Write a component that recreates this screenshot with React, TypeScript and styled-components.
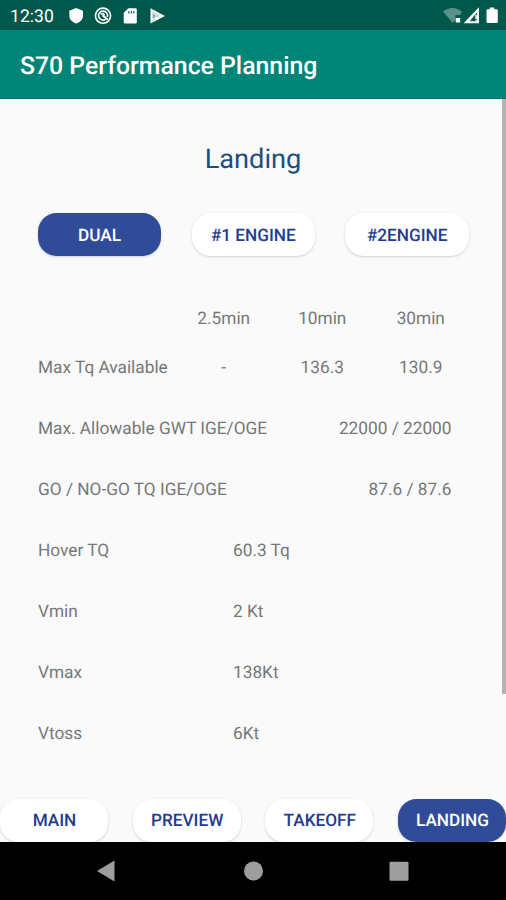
import React from "react";
import styled, { createGlobalStyle } from "styled-components";

const GlobalStyle = createGlobalStyle`
  *, *::before, *::after { box-sizing: border-box; }
  html, body { margin: 0; padding: 0; background: #fafafa; }
  body {
    font-family: Roboto, "Noto Sans", sans-serif;
    text-rendering: geometricPrecision;
    overflow: hidden;
  }
`;

const Screen = styled.div`
  display: flex;
  flex-direction: column;
  width: 506px;
  height: 900px;
  background: #fafafa;
  overflow: hidden;
`;

const StatusBar = styled.header`
  flex: none;
  height: 30px;
  padding: 1px 7px 0 10px;
  display: flex;
  align-items: center;
  justify-content: space-between;
  background: #00574b;
  color: #fff;
`;

const Clock = styled.span`
  width: 58px;
  padding-top: 2px;
  font-size: 17.6px;
  font-weight: 400;
  line-height: 20px;
`;

const StatusGroup = styled.div`
  display: flex;
  align-items: center;
  height: 20px;
`;

const StatusIcon = styled.svg`
  display: block;
  flex: none;
`;

const AppBar = styled.div`
  flex: none;
  height: 69px;
  padding: 5px 20px 0;
  display: flex;
  align-items: center;
  background: #008577;
  border-bottom: 1px solid #067668;
`;

const AppTitle = styled.h1`
  margin: 0;
  color: #fff;
  font-size: 24.8px;
  font-weight: 500;
  line-height: 30px;
  white-space: nowrap;
`;

const Body = styled.div`
  flex: 1;
  min-height: 0;
  display: flex;
`;

const Content = styled.main`
  flex: 1;
  min-width: 0;
  display: flex;
  flex-direction: column;
`;

const ScrollTrack = styled.div`
  flex: none;
  width: 4px;
  margin-left: -4px;
`;

const ScrollThumb = styled.div`
  height: 595px;
  background: #b3b3b3;
`;

const Heading = styled.h2`
  margin: 43px 0 0;
  color: #1b4f7f;
  font-size: 27.2px;
  font-weight: 400;
  line-height: 34px;
  text-align: center;
`;

const EngineRow = styled.div`
  display: grid;
  grid-template-columns: repeat(3, 123.5px);
  column-gap: 30.4px;
  margin: 37px 0 0 37.7px;
`;

const PillButton = styled.button<{ $active?: boolean }>`
  height: 43px;
  padding: 2px 0 0;
  border: 0;
  border-radius: 18.5px;
  background: ${(p) => (p.$active ? "#304c98" : "#ffffff")};
  color: ${(p) => (p.$active ? "#ffffff" : "#243b92")};
  box-shadow: 0 1px 2.5px rgba(0, 0, 0, 0.17);
  font-family: inherit;
  font-size: 17.2px;
  font-weight: 500;
  line-height: 20px;
  text-align: center;
  text-rendering: inherit;
  white-space: nowrap;
`;

const Table = styled.section`
  margin: 38px 0 0 38px;
  color: #777777;
  font-size: 17.25px;
  line-height: 20px;
  white-space: nowrap;
`;

const LimitGrid = styled.div`
  display: grid;
  grid-template-columns: 136.5px repeat(3, 98.5px);
  grid-auto-rows: 49px;
  align-items: center;
  margin-bottom: 6px;
`;

const Limit = styled.span`
  text-align: center;
`;

const PairRow = styled.div`
  display: flex;
  align-items: center;
  justify-content: space-between;
  width: 413.5px;
  height: 61px;
`;

const ValueRow = styled.div`
  display: grid;
  grid-template-columns: 195px 1fr;
  align-items: center;
  height: 61px;
`;

const Tabs = styled.nav`
  display: grid;
  grid-template-columns: repeat(4, 108px);
  justify-content: space-between;
  height: 44px;
  margin-top: auto;
  width: 506px;

  ${PillButton} {
    margin-top: 0.5px;
    padding: 1px 0 0 1px;
  }
`;

const NavBar = styled.footer`
  position: relative;
  flex: none;
  height: 58px;
  padding-left: 97px;
  display: flex;
  align-items: center;
  background: #000;
`;

const pairs = [
  ["Max. Allowable GWT IGE/OGE", "22000 / 22000"],
  ["GO / NO-GO TQ IGE/OGE", "87.6 / 87.6"],
];

const values = [
  ["Hover TQ", "60.3 Tq"],
  ["Vmin", "2 Kt"],
  ["Vmax", "138Kt"],
  ["Vtoss", "6Kt"],
];

function NotificationIcons() {
  return (
    <StatusIcon width="100" height="20" viewBox="0 0 100 20" fill="#fff">
      <path d="M8.2 2 15 4.7v5.1c0 3.6-2.7 6.3-6.8 7.8C4.100 16.100 1.300 13.400 1.300 9.800V4.700Z" />
      <g fill="none" stroke="#fff">
        <circle cx="35" cy="9.700" r="7.600" strokeWidth="1.600" />
        <path d="M37.600 13.300a4.500 4.500 0 1 1 1.700-2.200" strokeWidth="1.600" />
        <path d="m34.500 9.200 5.300 4.600" strokeWidth="2.100" />
        <path d="M32.600 8.300 35 7.500l1.600 1.800" strokeWidth="1.500" />
      </g>
      <path
        fillRule="evenodd"
        d="M60.300 2.200h7.200q1.300 0 1.300 1.300v12.700q0 1.300-1.300 1.300H57q-1.300 0-1.300-1.300V6.800ZM60.300 5v2.400h1.100V5Zm2.500 0v2.400h1.100V5Zm2.500 0v2.400h1.100V5Z"
      />
      <path d="M82.500 2.300 97 9.900l-14.500 7.500Z" />
      <path d="m84 4.300 7.800 8M84 15.500l7.800-8" stroke="#00574b" strokeOpacity=".4" strokeWidth=".9" />
      <path d="m84.600 6.600 3.200 3.300-3.200 3.300Z" fill="#7fa8a1" />
    </StatusIcon>
  );
}

function SystemIcons() {
  return (
    <StatusIcon width="58" height="20" viewBox="0 0 58 20">
      <path d="M2 5.500C7.500.800 15.300.800 20.800 5.500L19.300 9h-5v5l-2.600 3Z" fill="#5a928a" />
      <path d="M14.700 12h4.500v4.500h-4.500Z" fill="#fff" />
      <path fillRule="evenodd" d="M38 1.300v15.900H22.500Zm-2 5-7.300 8.900H36Z" fill="#fff" />
      <path d="M34.200 8.700h1.800v4.600h-1.800zM34.200 14.300h1.800V16h-1.800z" fill="#d9e8df" />
      <path d="M48.800 1.500h4.500v1.800h2.200q1.300 0 1.300 1.200v11.300q0 1.200-1.300 1.200h-8.700q-1.300 0-1.300-1.200V4.500q0-1.200 1.300-1.200h2Z" fill="#fff" />
    </StatusIcon>
  );
}

export default function App() {
  return (
    <>
      <GlobalStyle />
      <Screen>
        <StatusBar>
          <StatusGroup>
            <Clock>12:30</Clock>
            <NotificationIcons />
          </StatusGroup>
          <SystemIcons />
        </StatusBar>
        <AppBar>
          <AppTitle>S70 Performance Planning</AppTitle>
        </AppBar>
        <Body>
          <Content>
            <Heading>Landing</Heading>
            <EngineRow>
              <PillButton $active>DUAL</PillButton>
              <PillButton>#1 ENGINE</PillButton>
              <PillButton>#2ENGINE</PillButton>
            </EngineRow>
            <Table>
              <LimitGrid>
                <span />
                <Limit>2.5min</Limit>
                <Limit>10min</Limit>
                <Limit>30min</Limit>
                <span>Max Tq Available</span>
                <Limit>-</Limit>
                <Limit>136.3</Limit>
                <Limit>130.9</Limit>
              </LimitGrid>
              {pairs.map(([label, value]) => (
                <PairRow key={label}>
                  <span>{label}</span>
                  <span>{value}</span>
                </PairRow>
              ))}
              {values.map(([label, value]) => (
                <ValueRow key={label}>
                  <span>{label}</span>
                  <span>{value}</span>
                </ValueRow>
              ))}
            </Table>
            <Tabs>
              <PillButton>MAIN</PillButton>
              <PillButton>PREVIEW</PillButton>
              <PillButton>TAKEOFF</PillButton>
              <PillButton $active>LANDING</PillButton>
            </Tabs>
          </Content>
          <ScrollTrack>
            <ScrollThumb />
          </ScrollTrack>
        </Body>
        <NavBar>
          <svg width="320" height="22" viewBox="0 0 320 22" fill="#9e9e9e">
            <path d="M0 11 17.500.500v21Z" />
            <circle cx="156.500" cy="11" r="9.500" />
            <rect x="292.500" y="1.700" width="19" height="19" rx="1" />
          </svg>
        </NavBar>
      </Screen>
    </>
  );
}
